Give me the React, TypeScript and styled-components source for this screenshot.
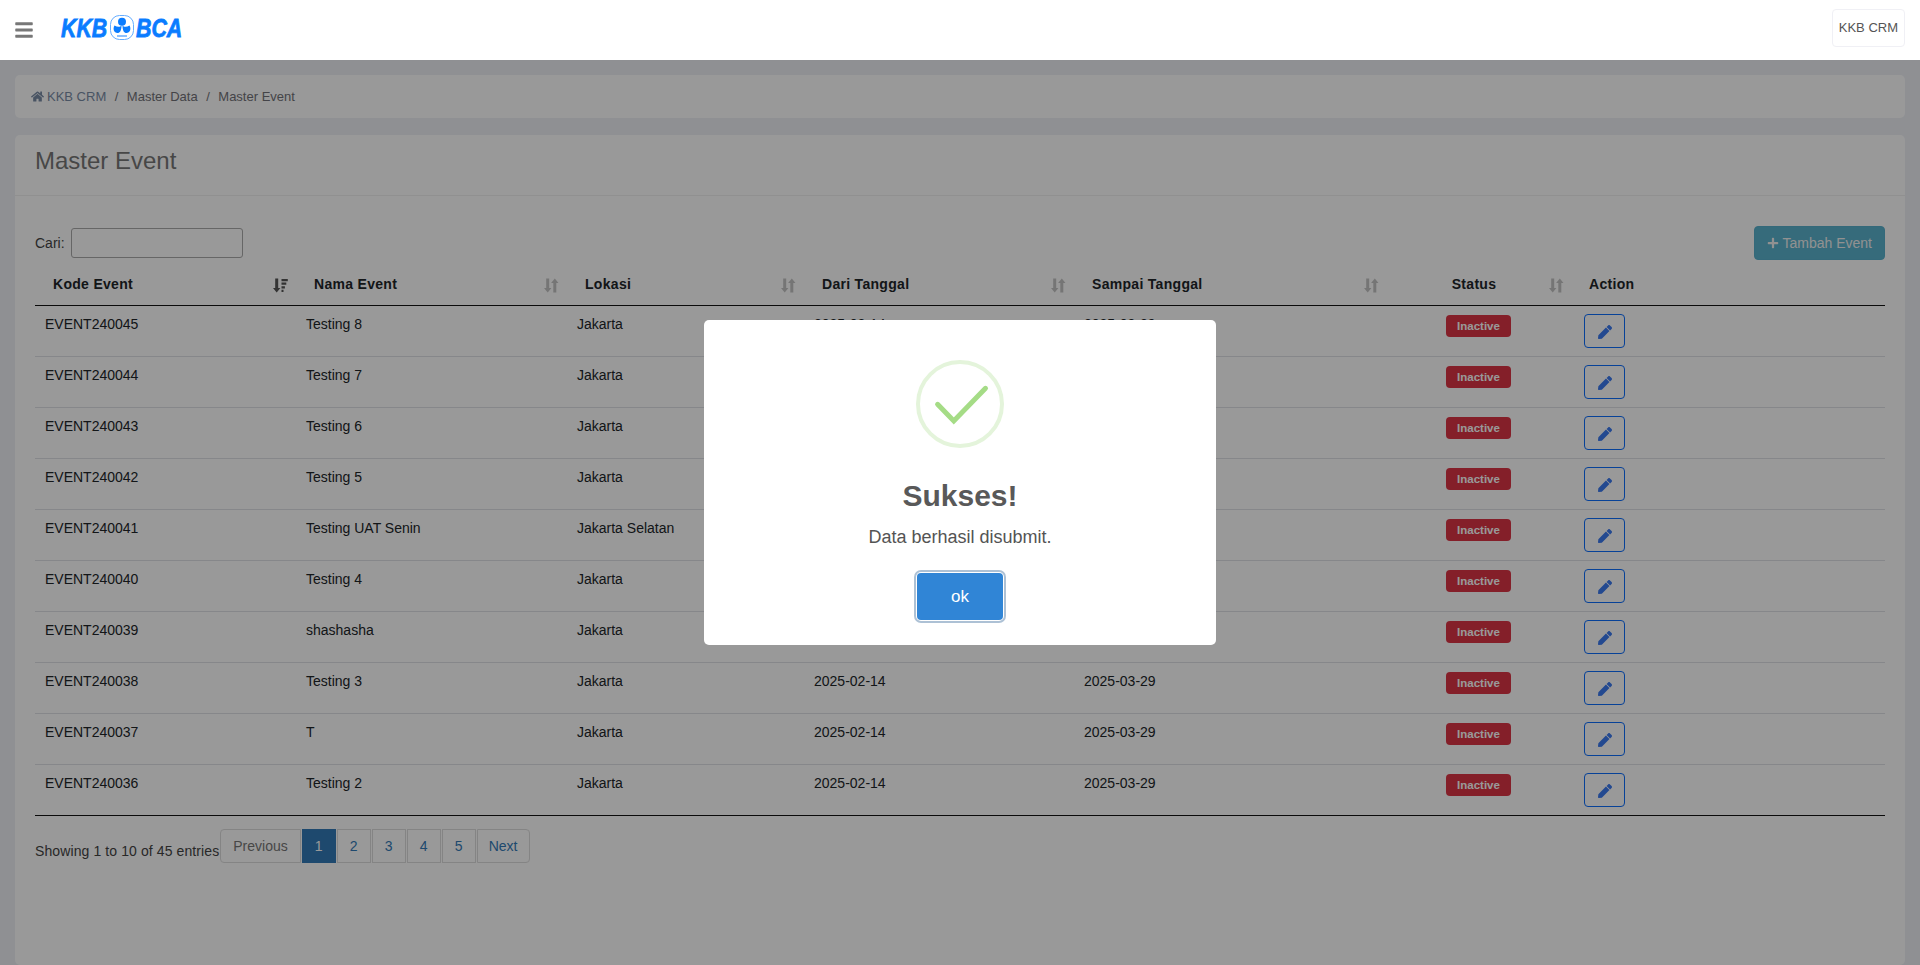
import React from 'react';
import styled, { createGlobalStyle } from 'styled-components';
import { FaBars, FaHome, FaPen, FaPlus } from 'react-icons/fa';

const GlobalStyle = createGlobalStyle`
    html, body {
        margin: 0;
        height: 100%;
        overflow: hidden;
    }
    body {
        background: #eef1f6;
        font-family: 'Liberation Sans', Arial, sans-serif;
        font-size: 14px;
        line-height: 20px;
        color: #212529;
    }
    * {
        box-sizing: border-box;
    }
`;

const Header = styled.header`
    position: relative;
    z-index: 20;
    display: flex;
    align-items: center;
    height: 60px;
    padding: 0 15px;
    background: #fff;
`;

const MenuButton = styled.div`
    display: flex;
    color: #777;
    font-size: 20px;
    margin-left: -1px;
`;

const Logo = styled.div`
    display: flex;
    align-items: center;
    gap: 2px;
    margin-left: 27px;
    margin-top: -5px;
    color: #0a7cff;
`;

const LogoText = styled.span`
    display: block;
    width: 47px;
    font-size: 26px;
    line-height: 24px;
    font-weight: 700;
    font-style: italic;
    white-space: nowrap;
    transform: scaleX(0.82);
    transform-origin: left center;
    -webkit-text-stroke: 0.8px #0a7cff;
`;

const UserButton = styled.div`
    margin-left: auto;
    display: flex;
    align-items: center;
    height: 38px;
    padding: 0 6px;
    border: 1px solid #f0f0f5;
    border-radius: 4px;
    font-size: 13px;
    color: #555;
    margin-top: -5px;
`;

const Content = styled.main`
    padding: 15px 15px 0;
`;

const Breadcrumb = styled.nav`
    display: flex;
    align-items: center;
    height: 43px;
    padding: 0 16px;
    background: #fff;
    border-radius: 5px;
    font-size: 13px;
    color: #727278;
`;

const Crumb = styled.span<{ $link?: boolean }>`
    display: inline-flex;
    align-items: center;
    gap: 3px;
    color: ${(p) => (p.$link ? '#7a8ca6' : '#727278')};
`;

const CrumbSep = styled.span`
    margin: 0 8.5px;
`;

const Card = styled.section`
    margin-top: 17px;
    height: 830px;
    background: #fff;
    border-radius: 5px;
`;

const CardHeader = styled.div`
    display: flex;
    align-items: center;
    height: 61px;
    padding: 0 20px 8px;
    border-bottom: 1px solid #f0f0f0;
`;

const CardTitle = styled.h3`
    margin: 0;
    font-size: 24px;
    font-weight: 400;
    line-height: 30px;
    color: #777;
`;

const CardBody = styled.div`
    padding: 30px 20px 0;
`;

const Toolbar = styled.div`
    display: flex;
    align-items: center;
    justify-content: space-between;
    height: 34px;
`;

const SearchLabel = styled.label`
    display: flex;
    align-items: center;
    gap: 6px;
    color: #444;
`;

const SearchInput = styled.input`
    width: 172px;
    height: 30px;
    padding: 0 8px;
    border: 1px solid #aaa;
    border-radius: 3px;
    background: #fff;
`;

const AddButton = styled.button`
    display: flex;
    align-items: center;
    gap: 4px;
    height: 34px;
    padding: 0 12px;
    border: 1px solid #58b0cb;
    border-radius: 4px;
    background: #5ab2cd;
    color: #f2f2f2;
    font: inherit;
    svg {
        font-size: 12px;
    }
`;

const Table = styled.table`
    width: 1850px;
    margin-top: 4px;
    table-layout: fixed;
    border-collapse: separate;
    border-spacing: 0;
`;

const Th = styled.th<{ $center?: boolean; $noSort?: boolean }>`
    padding: 10px ${(p) => (p.$center ? '10px' : '8px')} 11px ${(p) => (p.$noSort ? '15px' : '18px')};
    border-bottom: 1px solid #111;
    font-weight: 700;
    letter-spacing: 0.3px;
    text-align: left;
`;

const ThInner = styled.div`
    display: flex;
    align-items: center;
`;

const ThLabel = styled.span<{ $center?: boolean }>`
    flex: 1;
    ${(p) => p.$center && 'text-align: center; padding-right: 6px;'}
`;

const SortMark = styled.svg<{ $active?: boolean }>`
    flex: none;
    width: 15px;
    height: 15px;
    margin-top: 3px;
    fill: ${(p) => (p.$active ? '#555' : '#c4c4c4')};
`;

const Td = styled.td`
    padding: 8px 10px;
    border-bottom: 1px solid #dfe2e6;
    vertical-align: top;
`;

const LastRow = styled.tr`
    td {
        border-bottom-color: #111;
    }
`;

const StatusTd = styled(Td)`
    padding-right: 14px;
    text-align: center;
`;

const Badge = styled.span`
    display: inline-block;
    width: 65px;
    height: 22px;
    margin-top: 1px;
    border-radius: 4px;
    background: #dc3545;
    color: #fff;
    font-size: 11.5px;
    font-weight: 700;
    line-height: 22px;
    text-align: center;
    vertical-align: top;
`;

const EditButton = styled.button`
    display: flex;
    align-items: center;
    justify-content: center;
    width: 41px;
    height: 34px;
    padding: 2px 0 0;
    border: 1px solid #0d6efd;
    border-radius: 4px;
    background: transparent;
    color: #3b7af0;
    font-size: 14px;
`;

const Footer = styled.div`
    display: flex;
    align-items: flex-start;
    gap: 1px;
    margin-top: 13px;
`;

const Info = styled.div`
    padding-top: 12px;
    color: #444;
    letter-spacing: 0.1px;
`;

const Pager = styled.div`
    display: flex;
    gap: 1px;
`;

const PageButton = styled.a<{ $active?: boolean; $disabled?: boolean; $first?: boolean; $last?: boolean }>`
    display: flex;
    align-items: center;
    justify-content: center;
    height: 34px;
    min-width: 34px;
    padding: 0 ${(p) => (p.$last ? '11px' : '12px')};
    border: 1px solid ${(p) => (p.$active ? '#337ab7' : '#ddd')};
    background: ${(p) => (p.$active ? '#337ab7' : '#fff')};
    color: ${(p) => (p.$active ? '#fff' : p.$disabled ? '#777' : '#337ab7')};
    border-radius: ${(p) => (p.$first ? '4px 0 0 4px' : p.$last ? '0 4px 4px 0' : '0')};
`;

const Overlay = styled.div`
    position: fixed;
    inset: 0;
    z-index: 10;
    display: flex;
    align-items: flex-start;
    justify-content: center;
    padding: 320px 0 0 0;
    background: rgba(0, 0, 0, 0.4);
`;

const Modal = styled.div`
    display: flex;
    flex-direction: column;
    align-items: center;
    width: 512px;
    height: 325px;
    padding-top: 40px;
    background: #fff;
    border-radius: 5px;
`;

const ModalTitle = styled.h2`
    margin: 30px 0 0;
    font-size: 30px;
    line-height: 36px;
    font-weight: 700;
    color: #595959;
`;

const ModalText = styled.div`
    margin-top: 10px;
    font-size: 18px;
    line-height: 27px;
    color: #545454;
`;

const OkButton = styled.button`
    width: 86px;
    height: 47px;
    margin-top: 22px;
    border: 0;
    border-radius: 4px;
    background: #3085d6;
    color: #fff;
    font-family: inherit;
    font-size: 17px;
    box-shadow: 0 0 0 1px #fff, 0 0 0 3px rgba(50, 100, 150, 0.4);
`;

const columns = [
    { label: 'Kode Event', width: 261, active: true },
    { label: 'Nama Event', width: 271 },
    { label: 'Lokasi', width: 237 },
    { label: 'Dari Tanggal', width: 270 },
    { label: 'Sampai Tanggal', width: 313 },
    { label: 'Status', width: 187, center: true },
    { label: 'Action', width: 311, noSort: true },
];

const rows = [
    ['EVENT240045', 'Testing 8', 'Jakarta'],
    ['EVENT240044', 'Testing 7', 'Jakarta'],
    ['EVENT240043', 'Testing 6', 'Jakarta'],
    ['EVENT240042', 'Testing 5', 'Jakarta'],
    ['EVENT240041', 'Testing UAT Senin', 'Jakarta Selatan'],
    ['EVENT240040', 'Testing 4', 'Jakarta'],
    ['EVENT240039', 'shashasha', 'Jakarta'],
    ['EVENT240038', 'Testing 3', 'Jakarta'],
    ['EVENT240037', 'T', 'Jakarta'],
    ['EVENT240036', 'Testing 2', 'Jakarta'],
];

function SortIcon({ active }: { active?: boolean }) {
    return (
        <SortMark viewBox='0 0 15 15' $active={active}>
            <path d='M2.2 0.5h3v9.5h2.2l-3.7 4.5-3.7-4.5h2.200z' />
            {active ? (
                <path d='M8.500 1h6.300v2.200h-6.300zM8.500 4.600h4.800v2.200h-4.800zM8.500 8.200h3.400v2.200h-3.400zM8.500 11.800h2v2.200h-2z' />
            ) : (
                <path d='M12.300 14.500h-3v-9.500h-2.200l3.700-4.500 3.700 4.500h-2.200z' />
            )}
        </SortMark>
    );
}

function BcaEmblem() {
    return (
        <svg width='24' height='25' viewBox='0 0 24 25'>
            <rect x='0.5' y='0.5' width='23' height='24' rx='9' fill='#fff' stroke='#66adff' />
            <circle cx='12' cy='6.800' r='4' fill='#0a7cff' />
            <path d='M11.500 10.500c-1.500 2-4.500 1.500-7 0-2 3-.5 7.500 3 7.500 2.500 0 4-2.500 4-7.500z' fill='#0a7cff' />
            <path d='M12.500 10.500c1.500 2 4.500 1.500 7 0 2 3 .5 7.500-3 7.500-2.500 0-4-2.500-4-7.500z' fill='#0a7cff' />
            <path d='M7 21h10' stroke='#66adff' strokeWidth='1.500' />
        </svg>
    );
}

function CheckIcon() {
    return (
        <svg width='88' height='88' viewBox='0 0 88 88'>
            <circle cx='44' cy='44' r='42' fill='none' stroke='#e4f4db' strokeWidth='4' />
            <path
                d='M21.6 44.3L37.8 61L69.5 28.3'
                fill='none'
                stroke='#a5dc86'
                strokeWidth='5'
                strokeLinecap='round'
            />
        </svg>
    );
}

export default function App() {
    return (
        <>
            <GlobalStyle />
            <Header>
                <MenuButton>
                    <FaBars />
                </MenuButton>
                <Logo>
                    <LogoText>KKB</LogoText>
                    <BcaEmblem />
                    <LogoText>BCA</LogoText>
                </Logo>
                <UserButton>KKB CRM</UserButton>
            </Header>
            <Content>
                <Breadcrumb>
                    <Crumb $link>
                        <FaHome />
                        KKB CRM
                    </Crumb>
                    <CrumbSep>/</CrumbSep>
                    <Crumb>Master Data</Crumb>
                    <CrumbSep>/</CrumbSep>
                    <Crumb>Master Event</Crumb>
                </Breadcrumb>
                <Card>
                    <CardHeader>
                        <CardTitle>Master Event</CardTitle>
                    </CardHeader>
                    <CardBody>
                        <Toolbar>
                            <SearchLabel>
                                Cari:
                                <SearchInput />
                            </SearchLabel>
                            <AddButton>
                                <FaPlus />
                                Tambah Event
                            </AddButton>
                        </Toolbar>
                        <Table>
                            <colgroup>
                                {columns.map((c) => (
                                    <col key={c.label} width={c.width} />
                                ))}
                            </colgroup>
                            <thead>
                                <tr>
                                    {columns.map((c) => (
                                        <Th key={c.label} $center={c.center} $noSort={c.noSort}>
                                            <ThInner>
                                                <ThLabel $center={c.center}>{c.label}</ThLabel>
                                                {!c.noSort && <SortIcon active={c.active} />}
                                            </ThInner>
                                        </Th>
                                    ))}
                                </tr>
                            </thead>
                            <tbody>
                                {rows.map((r, i) => {
                                    const Row = i === rows.length - 1 ? LastRow : 'tr';
                                    return (
                                        <Row key={r[0]}>
                                            <Td>{r[0]}</Td>
                                            <Td>{r[1]}</Td>
                                            <Td>{r[2]}</Td>
                                            <Td>2025-02-14</Td>
                                            <Td>2025-03-29</Td>
                                            <StatusTd>
                                                <Badge>Inactive</Badge>
                                            </StatusTd>
                                            <Td>
                                                <EditButton>
                                                    <FaPen />
                                                </EditButton>
                                            </Td>
                                        </Row>
                                    );
                                })}
                            </tbody>
                        </Table>
                        <Footer>
                            <Info>Showing 1 to 10 of 45 entries</Info>
                            <Pager>
                                <PageButton $disabled $first>
                                    Previous
                                </PageButton>
                                <PageButton $active>1</PageButton>
                                <PageButton>2</PageButton>
                                <PageButton>3</PageButton>
                                <PageButton>4</PageButton>
                                <PageButton>5</PageButton>
                                <PageButton $last>Next</PageButton>
                            </Pager>
                        </Footer>
                    </CardBody>
                </Card>
            </Content>
            <Overlay>
                <Modal>
                    <CheckIcon />
                    <ModalTitle>Sukses!</ModalTitle>
                    <ModalText>Data berhasil disubmit.</ModalText>
                    <OkButton>ok</OkButton>
                </Modal>
            </Overlay>
        </>
    );
}
